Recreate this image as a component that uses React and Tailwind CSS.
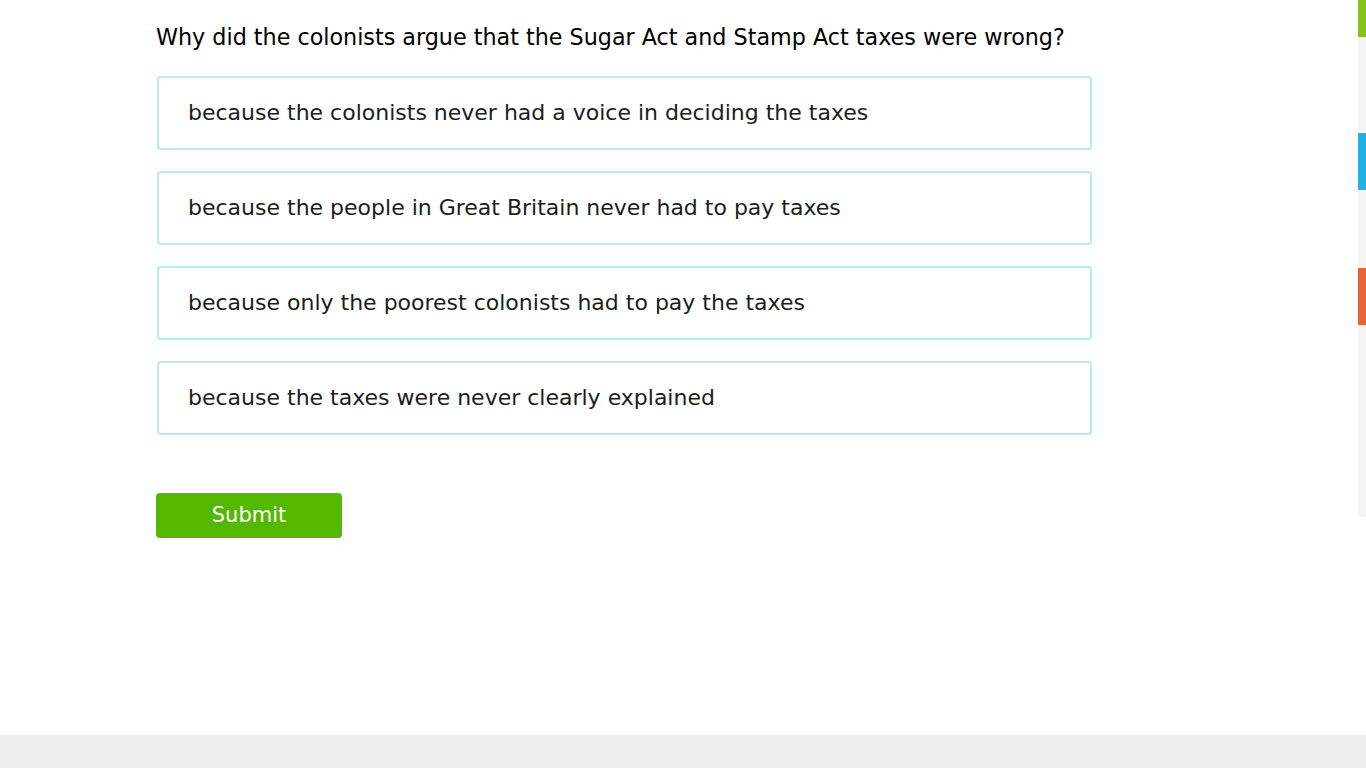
const choices = [
	'because the colonists never had a voice in deciding the taxes',
	'because the people in Great Britain never had to pay taxes',
	'because only the poorest colonists had to pay the taxes',
	'because the taxes were never clearly explained',
]

const App = () => {
	return (
		<div className="w-[1366px] h-[768px] flex flex-col bg-white font-['DejaVu_Sans',Verdana,sans-serif] overflow-hidden">
			<div className="flex-1 flex">
				<main className="flex-1 pl-[156px] pt-[24px]">
					<h1 className="text-[22.25px] leading-[26px] text-black">
						Why did the colonists argue that the Sugar Act and Stamp Act taxes were wrong?
					</h1>
					<div className="mt-[26px] flex flex-col gap-[21px] w-[936px] pl-px">
						{choices.map((c) => (
							<button
								key={c}
								className="h-[74px] w-full border-2 border-[#b5ebf3] rounded-[4px] bg-white text-left pl-[29px] pb-[2px] text-[22px] text-[#1c1c1c] cursor-pointer"
							>
								{c}
							</button>
						))}
					</div>
					<button className="mt-[58px] w-[186px] h-[45px] rounded-[4px] bg-[#54b800] text-white text-[21px] pt-px">
						Submit
					</button>
				</main>
				<aside className="w-[8px] h-[517px] bg-[#f4f4f4] flex flex-col">
					<div className="h-[37px] bg-[#86c21c]"></div>
					<div className="h-[96px]"></div>
					<div className="h-[57px] bg-[#22b1e4]"></div>
					<div className="h-[78px]"></div>
					<div className="h-[57px] bg-[#e5633a]"></div>
				</aside>
			</div>
			<footer className="h-[33px] bg-[#eeeeee]"></footer>
		</div>
	)
}

export default App
